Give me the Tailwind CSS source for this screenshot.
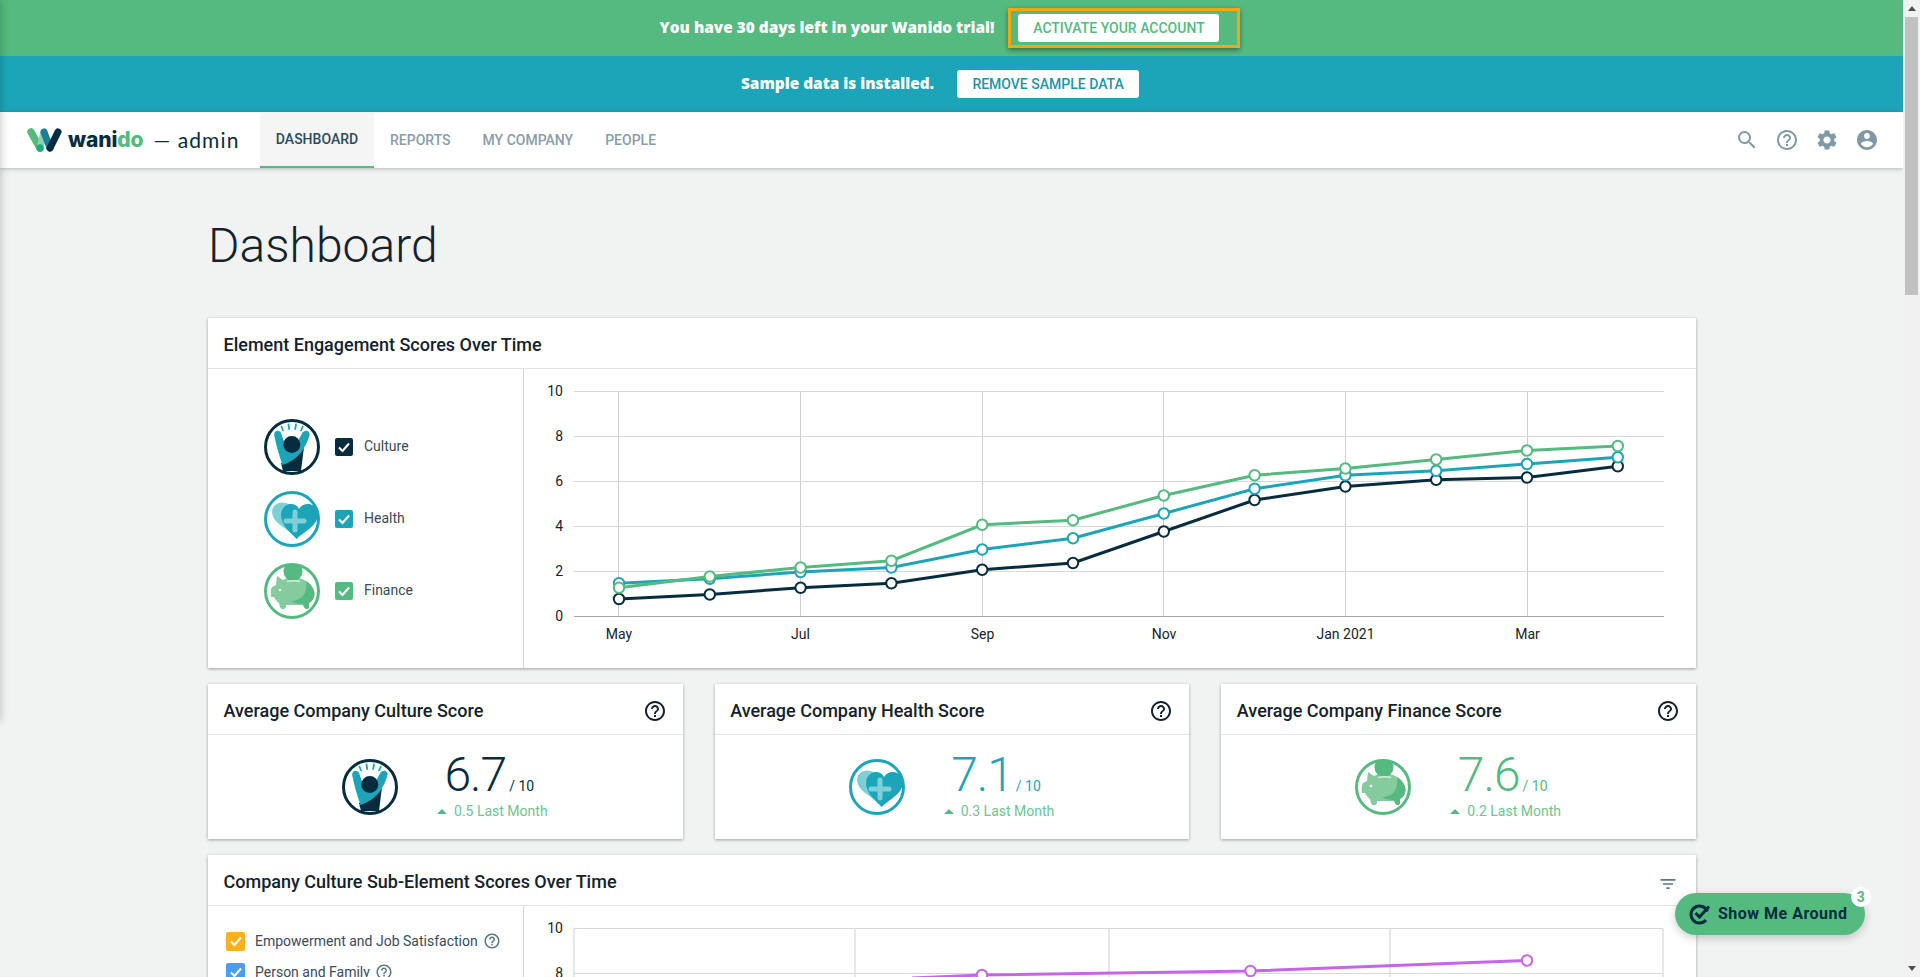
<!DOCTYPE html>
<html lang="en">

<head>
    <meta charset="UTF-8">
    <title>Wanido - Dashboard</title>
    <script src="https://cdn.jsdelivr.net/npm/@tailwindcss/browser@4"></script>
</head>

<body class="overflow-hidden bg-[#f1f3f3] font-['Roboto',sans-serif] text-[#15222b]">
    <!-- shared icons -->
    <svg width="0" height="0" class="absolute">
        <defs>
            <clipPath id="round"><circle cx="28" cy="28" r="26"/></clipPath>
            <symbol id="culture" viewBox="0 0 56 56">
                <circle cx="28" cy="28" r="26.5" fill="#fff" stroke="#062c40" stroke-width="3"/>
                <g clip-path="url(#round)">
                    <path d="M19 52 L17 44 C27 43 35 37 40 28 L37 52Z" fill="#062c40"/>
                    <path d="M10.2 16 C9.5 11 16 10 17.3 14.5 C19 20 21 27 27 31 C32 27 35 20 38 14.5 C40 10 46.500 11 45.500 16 C43 25 37 40 18.500 46 C15 36 12 26 10.200 16Z" fill="#1ca5b8"/>
                    <circle cx="27.800" cy="25.500" r="8.500" fill="#062c40"/>
                    <path d="M17.500 7.500 L19 11.500 M24.500 5.500 L25.200 10 M32 5.500 L31.200 10 M38.800 7.500 L37 11.500" stroke="#1ca5b8" stroke-width="1.800" stroke-linecap="round"/>
                </g>
            </symbol>
            <symbol id="health" viewBox="0 0 56 56">
                <circle cx="28" cy="28" r="26.500" fill="#fff" stroke="#1ca5b8" stroke-width="3"/>
                <path d="M26 41 C16 34 8 29 8 21 C8 15 13 11.500 18 11.500 C24 11.500 30 15 36 22 L36 32Z" fill="#7fd0d6"/>
                <path d="M32.500 48 C26 41 17 34 17 24 C17 17 22 13 27 13 C30.500 13 33.500 14.800 35 18 C37 14.800 40 13 44 13 C50 13 54 18 54 24 C54 34 40 41 32.500 48Z" fill="#1ca5b8"/>
                <path d="M31 21 V39 M22 30 H40" stroke="#7fd0d6" stroke-width="5" stroke-linecap="round"/>
            </symbol>
            <symbol id="finance" viewBox="0 0 56 56">
                <circle cx="28" cy="28" r="26.500" fill="#fff" stroke="#54ba80" stroke-width="3"/>
                <g clip-path="url(#round)">
                    <path d="M13 13 L19 17 C25 14 36 14 42 18 C48 22 52 28 50 34 C49 37 47 39 45 40 L45 44 C45 46.500 41 46.500 40 44 L39 42 L22 42 L22 44 C21 47 17 47 16 44 L15 40 C12 38 11 36 10 34 L7 34 C6.500 30 6.500 26 8 24 L12 22Z" fill="#85cb9e"/>
                    <path d="M42 18 C48 22 52 28 50 34 C49 37 47 39 45 40 L45 44 C45 46.500 41 46.500 40 44 L39 41 C34 41 30 40 27 38 C36 38 44 32 42 18Z" fill="#54ba80"/>
                    <circle cx="29" cy="8.500" r="9.500" fill="#54ba80"/>
                    <path d="M23 18.500 C27 17.500 32 17.500 36 18.500" stroke="#d5eedd" stroke-width="1.500" fill="none"/>
                    <circle cx="16" cy="27" r="1.300" fill="#e8f6ee"/>
                </g>
            </symbol>
            <symbol id="help" viewBox="0 0 24 24">
                <path fill="currentColor" d="M11 18h2v-2h-2v2zm1-16C6.480 2 2 6.480 2 12s4.480 10 10 10 10-4.480 10-10S17.520 2 12 2zm0 18c-4.410 0-8-3.590-8-8s3.590-8 8-8 8 3.590 8 8-3.590 8-8 8zm0-14c-2.210 0-4 1.790-4 4h2c0-1.100.9-2 2-2s2 .9 2 2c0 2-3 1.750-3 5h2c0-2.250 3-2.500 3-5 0-2.210-1.790-4-4-4z"/>
            </symbol>
            <symbol id="tick" viewBox="0 0 18 18">
                <path d="M4 9.500 L7.500 13 L14 5.500" fill="none" stroke="#fff" stroke-width="2"/>
            </symbol>
        </defs>
    </svg>

    <div class="flex h-[977px] overflow-hidden">
        <div class="relative w-[1903px] shrink-0 overflow-hidden">
            <!-- trial banner -->
            <div class="relative z-20 flex h-14 items-center justify-center gap-[14px] bg-[#54ba80] pr-[3px]">
                <p class="font-['Open_Sans',sans-serif] text-[15.4px] font-extrabold text-white">You have 30 days left in your Wanido trial!</p>
                <div class="border-[3px] border-[#f0a80e] py-[3px] pl-[7px] pr-[18px] shadow-[0_2px_5px_rgba(0,0,0,0.4)]">
                    <button class="block h-7 w-[201px] rounded-[3px] bg-white text-[14px] font-medium uppercase text-[#54ba80]">Activate your account</button>
                </div>
            </div>
            <!-- sample data banner -->
            <div class="relative z-10 flex h-14 items-center justify-center gap-[23px] bg-[#1ca5b8] pr-[23px]">
                <p class="font-['Open_Sans',sans-serif] text-[15.4px] font-extrabold text-white">Sample data is installed.</p>
                <button class="block h-7 w-[182px] rounded-[3px] bg-white text-[14px] font-medium uppercase text-[#1b96a8]">Remove sample data</button>
            </div>
            <!-- nav -->
            <nav class="relative z-10 flex h-14 items-stretch bg-white shadow-[0_1px_4px_rgba(0,0,0,0.25)]">
                <div class="flex w-[260px] shrink-0 items-center pl-[27px]">
                    <svg width="36" height="25" viewBox="27 128 36 25" class="shrink-0">
                        <path d="M31 132 L40 148" stroke="#54ba80" stroke-width="7.500" stroke-linecap="round"/>
                        <path d="M44 132 L40 148" stroke="#8fd0b0" stroke-width="7" stroke-linecap="round"/>
                        <path d="M44 132 L50 148" stroke="#1c7f98" stroke-width="7" stroke-linecap="round"/>
                        <path d="M58 132 L50 148" stroke="#062c40" stroke-width="7" stroke-linecap="round"/>
                        <circle cx="40" cy="148" r="3.700" fill="#1fa97c"/>
                    </svg>
                    <span class="ml-[5px] font-['Inter',sans-serif] text-[21px] font-extrabold tracking-[-0.1px] text-[#062c40]">wani<span class="text-[#54ba80]">do</span></span>
                    <span class="ml-[10px] font-['Lato',sans-serif] text-[21px] tracking-[1.1px] text-[#062c40]">— admin</span>
                </div>
                <a class="flex w-[114px] items-center justify-center border-b-2 border-[#54ba80] bg-[#f5f5f5] text-[14px] font-medium text-[#2c4a5a]">DASHBOARD</a>
                <a class="ml-[16px] flex items-center text-[14px] font-medium text-[#8a9ca6]">REPORTS</a>
                <a class="ml-[32px] flex items-center text-[14px] font-medium text-[#8a9ca6]">MY COMPANY</a>
                <a class="ml-[32px] flex items-center text-[14px] font-medium text-[#8a9ca6]">PEOPLE</a>
                <div class="ml-auto flex items-center gap-4 pr-[24px] text-[#7f9aa4]">
                    <svg width="24" height="24" viewBox="0 0 24 24"><path fill="currentColor" d="M15.500 14h-.79l-.28-.27A6.471 6.471 0 0 0 16 9.500 6.500 6.500 0 1 0 9.500 16c1.610 0 3.090-.59 4.230-1.570l.27.28v.79l5 4.990L20.490 19l-4.990-5zm-6 0C7.010 14 5 11.990 5 9.500S7.010 5 9.500 5 14 7.010 14 9.500 11.990 14 9.500 14z"/></svg>
                    <svg width="24" height="24"><use href="#help"/></svg>
                    <svg width="24" height="24" viewBox="0 0 24 24"><path fill="currentColor" d="M19.140 12.940c.04-.3.06-.61.06-.94 0-.32-.02-.64-.07-.94l2.030-1.580a.49.49 0 0 0 .12-.61l-1.920-3.320a.488.488 0 0 0-.59-.22l-2.390.96c-.5-.38-1.030-.7-1.620-.94l-.36-2.540a.484.484 0 0 0-.48-.41h-3.840c-.24 0-.43.17-.47.41l-.36 2.540c-.59.24-1.130.57-1.620.94l-2.390-.96c-.22-.08-.47 0-.59.22L2.740 8.870c-.12.21-.08.47.12.61l2.030 1.580c-.05.3-.09.63-.09.94s.02.64.07.94l-2.030 1.580a.49.49 0 0 0-.12.61l1.920 3.320c.12.22.37.29.59.22l2.390-.96c.5.38 1.030.7 1.620.94l.36 2.540c.05.24.24.41.48.41h3.840c.24 0 .44-.17.47-.41l.36-2.540c.59-.24 1.130-.56 1.620-.94l2.390.96c.22.08.47 0 .59-.22l1.920-3.320c.12-.22.07-.47-.12-.61l-2.010-1.580zM12 15.600c-1.980 0-3.600-1.620-3.600-3.600s1.620-3.600 3.600-3.600 3.600 1.620 3.600 3.600-1.620 3.600-3.600 3.600z"/></svg>
                    <svg width="24" height="24" viewBox="0 0 24 24"><path fill="currentColor" d="M12 2C6.480 2 2 6.480 2 12s4.480 10 10 10 10-4.480 10-10S17.520 2 12 2zm0 3c1.660 0 3 1.340 3 3s-1.340 3-3 3-3-1.340-3-3 1.340-3 3-3zm0 14.200c-2.500 0-4.710-1.280-6-3.220.03-1.990 4-3.080 6-3.080 1.990 0 5.970 1.090 6 3.080-1.290 1.940-3.500 3.220-6 3.220z"/></svg>
                </div>
            </nav>

            <main class="ml-[208px] w-[1488px]">
                <h1 class="mt-[49px] h-[58px] text-[48px] font-light leading-[58px] text-[#15222b]">Dashboard</h1>

                <!-- engagement chart -->
                <section class="mt-[43px] bg-white shadow-[0_1px_3px_rgba(0,0,0,0.35)]">
                    <h2 class="flex h-[51px] items-center border-b border-[#e2e4e4] px-[15.500px] pt-[2px] text-[18px] font-medium">Element Engagement Scores Over Time</h2>
                    <div class="flex h-[299px]">
                        <div class="flex w-[316px] shrink-0 flex-col justify-center gap-4 border-r border-[#d4d6d6] pl-[56px]">
                            <label class="flex items-center text-[14px] text-[#3a4a5a]">
                                <svg width="56" height="56"><use href="#culture"/></svg>
                                <span class="ml-[15px] grid h-[18px] w-[18px] place-items-center rounded-[2px] bg-[#062c40]"><svg width="18" height="18"><use href="#tick"/></svg></span>
                                <span class="ml-[11px]">Culture</span>
                            </label>
                            <label class="flex items-center text-[14px] text-[#3a4a5a]">
                                <svg width="56" height="56"><use href="#health"/></svg>
                                <span class="ml-[15px] grid h-[18px] w-[18px] place-items-center rounded-[2px] bg-[#1ca5b8]"><svg width="18" height="18"><use href="#tick"/></svg></span>
                                <span class="ml-[11px]">Health</span>
                            </label>
                            <label class="flex items-center text-[14px] text-[#3a4a5a]">
                                <svg width="56" height="56"><use href="#finance"/></svg>
                                <span class="ml-[15px] grid h-[18px] w-[18px] place-items-center rounded-[2px] bg-[#54ba80]"><svg width="18" height="18"><use href="#tick"/></svg></span>
                                <span class="ml-[11px]">Finance</span>
                            </label>
                        </div>
                        <svg id="chart-main" class="block" width="1172" height="299" viewBox="524 369 1172 299"></svg>
                    </div>
                </section>

                <!-- score cards -->
                <div class="mt-[16px] grid grid-cols-3 gap-[32px]">
                    <section class="bg-white shadow-[0_1px_3px_rgba(0,0,0,0.35)]">
                        <h2 class="flex h-[51px] items-center justify-between border-b border-[#e2e4e4] pl-[15.500px] pr-[16px] pt-[2px] text-[18px] font-medium">Average Company Culture Score<svg width="24" height="24" class="mt-[2px] text-[#15222b]"><use href="#help"/></svg></h2>
                        <div class="flex h-[104px] items-center justify-center gap-[39px] pr-[1px]">
                            <svg width="56" height="56"><use href="#culture"/></svg>
                            <div class="-mt-[4px] text-center">
                                <p class="h-[52px] pr-[6px] text-[48px] font-light leading-[52px] tracking-[-1px] text-[#062c40]">6.7<span class="ml-[3px] text-[14px] font-normal tracking-normal">/ 10</span></p>
                                <p class="text-[14px] text-[#6cc592]"><span class="mr-[7px] inline-block h-0 w-0 -translate-y-[2px] border-x-[5px] border-b-[5px] border-x-transparent border-b-[#54ba80]"></span>0.5 Last Month</p>
                            </div>
                        </div>
                    </section>
                    <section class="bg-white shadow-[0_1px_3px_rgba(0,0,0,0.35)]">
                        <h2 class="flex h-[51px] items-center justify-between border-b border-[#e2e4e4] pl-[15.500px] pr-[16px] pt-[2px] text-[18px] font-medium">Average Company Health Score<svg width="24" height="24" class="mt-[2px] text-[#15222b]"><use href="#help"/></svg></h2>
                        <div class="flex h-[104px] items-center justify-center gap-[39px] pr-[1px]">
                            <svg width="56" height="56"><use href="#health"/></svg>
                            <div class="-mt-[4px] text-center">
                                <p class="h-[52px] pr-[6px] text-[48px] font-light leading-[52px] tracking-[-1px] text-[#1ca5b8]">7.1<span class="ml-[3px] text-[14px] font-normal tracking-normal">/ 10</span></p>
                                <p class="text-[14px] text-[#6cc592]"><span class="mr-[7px] inline-block h-0 w-0 -translate-y-[2px] border-x-[5px] border-b-[5px] border-x-transparent border-b-[#54ba80]"></span>0.3 Last Month</p>
                            </div>
                        </div>
                    </section>
                    <section class="bg-white shadow-[0_1px_3px_rgba(0,0,0,0.35)]">
                        <h2 class="flex h-[51px] items-center justify-between border-b border-[#e2e4e4] pl-[15.500px] pr-[16px] pt-[2px] text-[18px] font-medium">Average Company Finance Score<svg width="24" height="24" class="mt-[2px] text-[#15222b]"><use href="#help"/></svg></h2>
                        <div class="flex h-[104px] items-center justify-center gap-[39px] pr-[1px]">
                            <svg width="56" height="56"><use href="#finance"/></svg>
                            <div class="-mt-[4px] text-center">
                                <p class="h-[52px] pr-[6px] text-[48px] font-light leading-[52px] tracking-[-1px] text-[#54ba80]">7.6<span class="ml-[3px] text-[14px] font-normal tracking-normal">/ 10</span></p>
                                <p class="text-[14px] text-[#6cc592]"><span class="mr-[7px] inline-block h-0 w-0 -translate-y-[2px] border-x-[5px] border-b-[5px] border-x-transparent border-b-[#54ba80]"></span>0.2 Last Month</p>
                            </div>
                        </div>
                    </section>
                </div>

                <!-- sub-element chart, runs off the bottom of the window -->
                <section class="mt-[16px] bg-white shadow-[0_1px_3px_rgba(0,0,0,0.35)]">
                    <h2 class="flex h-[51px] items-center justify-between border-b border-[#e2e4e4] pl-[15.500px] pr-[18px] pt-[2px] text-[18px] font-medium">Company Culture Sub-Element Scores Over Time
                        <svg width="20" height="20" viewBox="0 0 24 24" class="mt-[6px] text-[#5a7583]"><path fill="currentColor" d="M10 18h4v-2h-4v2zM3 6v2h18V6H3zm3 7h12v-2H6v2z"/></svg>
                    </h2>
                    <div class="flex h-[300px]">
                        <div class="w-[316px] shrink-0 border-r border-[#d4d6d6] pl-[18px] pt-[25px] text-[14px] text-[#3a4a5a]">
                            <label class="flex h-[20px] items-center">
                                <span class="grid h-[19px] w-[19px] place-items-center rounded-[2px] bg-[#fdb01e]"><svg width="18" height="18"><use href="#tick"/></svg></span>
                                <span class="ml-[10px]">Empowerment and Job Satisfaction</span>
                                <svg width="18" height="18" class="ml-[5px] text-[#5a7583]"><use href="#help"/></svg>
                            </label>
                            <label class="mt-[11px] flex h-[20px] items-center">
                                <span class="grid h-[19px] w-[19px] place-items-center rounded-[2px] bg-[#4a9df0]"><svg width="18" height="18"><use href="#tick"/></svg></span>
                                <span class="ml-[10px]">Person and Family</span>
                                <svg width="18" height="18" class="ml-[5px] text-[#5a7583]"><use href="#help"/></svg>
                            </label>
                        </div>
                        <svg id="chart-sub" class="block" width="1172" height="300" viewBox="524 906 1172 300"></svg>
                    </div>
                </section>
            </main>

            <!-- sidebar hidden off the left edge, only its shadow shows -->
            <div class="absolute left-[-20px] top-0 z-30 h-[720px] w-[20px] shadow-[0_0_10px_rgba(0,0,0,0.25)]"></div>

            <!-- tour widget -->
            <button class="absolute left-[1675px] top-[893px] z-40 flex h-[42px] w-[190px] items-center rounded-full bg-[#54ba80] pl-[14px] text-[16px] font-bold tracking-[0.5px] text-[#062c40] shadow-[0_3px_10px_rgba(0,0,0,0.2)]">
                <svg width="22" height="22" viewBox="0 0 22 22" fill="none" stroke="#062c40" stroke-width="3">
                    <path d="M18.500 8.500 A8.500 8.500 0 1 0 17 17"/>
                    <path d="M6.500 10 L10.500 14 L20 3.500"/>
                </svg>
                <span class="ml-[7px]">Show Me Around</span>
                <span class="absolute right-[-6px] top-[-6px] grid h-5 w-5 place-items-center rounded-full bg-white text-[14px] font-bold text-[#54ba80]">3</span>
            </button>
        </div>

        <!-- scrollbar -->
        <div class="flex w-[17px] shrink-0 flex-col items-center bg-[#f1f1f1]">
            <div class="mt-[6px] h-0 w-0 border-x-[4px] border-b-[5px] border-x-transparent border-b-[#505050]"></div>
            <div class="mt-[6px] h-[278px] w-[13px] bg-[#c1c1c1]"></div>
            <div class="mt-auto mb-[6px] h-0 w-0 border-x-[4px] border-t-[5px] border-x-transparent border-t-[#505050]"></div>
        </div>
    </div>

    <script>
        const NS = 'http://www.w3.org/2000/svg';

        function add(svg, name, attrs, text) {
            let el = document.createElementNS(NS, name);
            for (let k in attrs) el.setAttribute(k, attrs[k]);
            if (text !== undefined) el.textContent = text;
            svg.append(el);
            return el;
        }

        function drawGrid(svg, top, step, left, right, bottom, verticals) {
            for (let x of verticals)
                add(svg, 'line', { x1: x, x2: x, y1: top, y2: bottom, stroke: '#cfcfcf' });
            for (let i = 0; i <= 5; i++) {
                let y = top + i * step;
                add(svg, 'line', { x1: left, x2: right, y1: y, y2: y, stroke: i == 5 ? '#a8a8a8' : '#d8d8d8' });
                add(svg, 'text', { x: 563, y: y + 4.5, 'text-anchor': 'end', 'font-size': 14, fill: '#15222b' }, 10 - i * 2);
            }
        }

        function drawLine(svg, pts, color) {
            add(svg, 'polyline', { points: pts.map(p => p.join(',')).join(' '), fill: 'none', stroke: color, 'stroke-width': 3 });
            for (let p of pts)
                add(svg, 'circle', { cx: p[0], cy: p[1], r: 5.2, fill: '#fff', stroke: color, 'stroke-width': 2 });
        }

        // main chart
        let main = document.getElementById('chart-main');
        drawGrid(main, 391.5, 45, 574, 1664, 616.5, [618.5, 800.5, 982.5, 1163.5, 1345.5, 1527.5]);
        [['May', 619], ['Jul', 800.5], ['Sep', 982.5], ['Nov', 1164], ['Jan 2021', 1345.5], ['Mar', 1527.5]].forEach(l =>
            add(main, 'text', { x: l[1], y: 639, 'text-anchor': 'middle', 'font-size': 14, fill: '#15222b' }, l[0]));
        const series = [
            ['#062c40', [.8, 1, 1.3, 1.5, 2.1, 2.4, 3.8, 5.2, 5.8, 6.1, 6.2, 6.7]],
            ['#1ca5b8', [1.5, 1.7, 2, 2.2, 3, 3.5, 4.6, 5.7, 6.3, 6.5, 6.8, 7.1]],
            ['#54ba80', [1.3, 1.8, 2.2, 2.5, 4.1, 4.3, 5.4, 6.3, 6.6, 7, 7.4, 7.6]],
        ];
        for (let [color, vals] of series)
            drawLine(main, vals.map((v, i) => [619 + i * 90.8, 617 - v * 22.5]), color);

        // second chart, only its top is in view
        let sub = document.getElementById('chart-sub');
        drawGrid(sub, 928.5, 45, 574, 1663, 1153.5, [574, 855, 1109, 1390, 1663]);
        drawLine(sub, [[912, 978], [982, 975], [1250.5, 971], [1527, 960.5]], '#c665ea');
        sub.querySelector('circle').remove();
    </script>
</body>

</html>
